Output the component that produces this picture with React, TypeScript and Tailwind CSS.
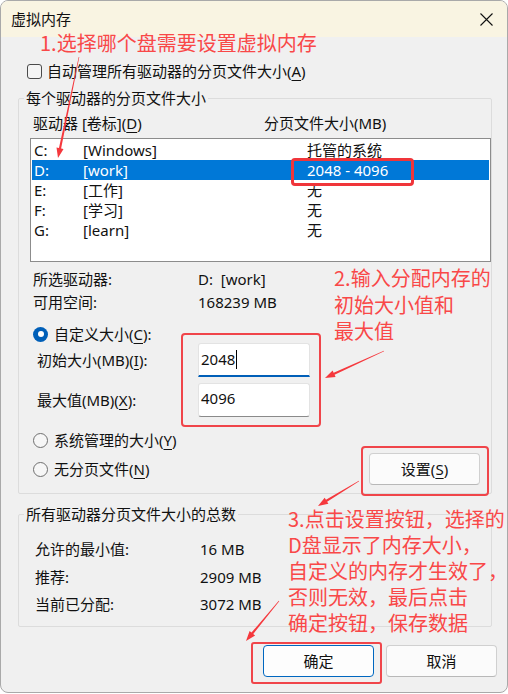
import React from "react";

const RED = "#f5383d";

function Mn({ children }: { children: React.ReactNode }) {
  return <span className="underline decoration-[1px] underline-offset-[3px]">{children}</span>;
}

function Radio({ checked }: { checked?: boolean }) {
  if (checked) {
    return (
      <span className="flex h-[15px] w-[15px] shrink-0 items-center justify-center rounded-full bg-[#005fb8]">
        <span className="h-[6px] w-[6px] rounded-full bg-white" />
      </span>
    );
  }
  return <span className="h-[15px] w-[15px] shrink-0 rounded-full border border-[#6f6f6f] bg-[#f6f6f6]" />;
}

// Tapered annotation arrow: thin tail, filled triangular head at (x2, y2)
function Arrow({ x1, y1, x2, y2 }: { x1: number; y1: number; x2: number; y2: number }) {
  const dx = x2 - x1;
  const dy = y2 - y1;
  const len = Math.hypot(dx, dy);
  const ux = dx / len;
  const uy = dy / len;
  const px = -uy;
  const py = ux;
  const hl = 10;
  const hw = 3.6;
  const bx = x2 - ux * hl;
  const by = y2 - uy * hl;
  const tw = 0.3;
  const sw = 1.1;
  const pts = [
    [x1 + px * tw, y1 + py * tw],
    [bx + px * sw, by + py * sw],
    [bx + px * hw, by + py * hw],
    [x2, y2],
    [bx - px * hw, by - py * hw],
    [bx - px * sw, by - py * sw],
    [x1 - px * tw, y1 - py * tw],
  ]
    .map((p) => `${p[0].toFixed(2)},${p[1].toFixed(2)}`)
    .join(" ");
  return <polygon points={pts} fill={RED} />;
}

const drives = [
  { l: "C:", n: "[Windows]", s: "托管的系统" },
  { l: "D:", n: "[work]", s: "2048 - 4096", sel: true },
  { l: "E:", n: "[工作]", s: "无" },
  { l: "F:", n: "[学习]", s: "无" },
  { l: "G:", n: "[learn]", s: "无" },
];

export default function App() {
  return (
    <div className="relative h-[694px] w-[508px] overflow-hidden bg-white font-['Noto_Sans','Noto_Sans_CJK_SC',sans-serif] text-[15px] leading-[20px] text-[#111]">
      {/* dialog window */}
      <div className="flex h-[693px] w-[508px] flex-col overflow-hidden rounded-[8px] border border-[#a9a9a9] bg-[#f0f0f0]">
        {/* title bar */}
        <div className="flex h-[36px] shrink-0 items-center justify-between bg-[#f9f4e2] pl-[10px] pr-[14px]">
          <span className="text-[15px] leading-[20px]">虚拟内存</span>
          <svg width="13" height="13" viewBox="0 0 13 13">
            <path d="M0.5 0.5 L12.5 12.5 M12.5 0.5 L0.5 12.5" stroke="#111" strokeWidth="1.1" />
          </svg>
        </div>

        {/* automatic management */}
        <div className="ml-[26px] mt-[24px] flex h-[20px] items-center gap-[5px]">
          <span className="h-[15px] w-[15px] shrink-0 rounded-[3px] border border-[#4a4a4a] bg-[#f4f4f4]" />
          <span>
            自动管理所有驱动器的分页文件大小(<Mn>A</Mn>)
          </span>
        </div>

        {/* per-drive paging file size */}
        <fieldset className="ml-[17px] mt-[7px] w-[474px] rounded-[2px] border border-[#dcdcdc] pb-[8px]">
          <legend className="ml-[5px] h-[20px] px-[2px] leading-[20px]">每个驱动器的分页文件大小</legend>
          <div className="mt-[5px] flex h-[20px] items-center pl-[14px]">
            <span className="w-[231px]">
              驱动器 [卷标](<Mn>D</Mn>)
            </span>
            <span>分页文件大小(MB)</span>
          </div>
          <div className="ml-[11px] mt-[5px] h-[124px] w-[461px] border border-[#8c8c8c] bg-white p-[1px]">
            {drives.map((d) => (
              <div
                key={d.l}
                className={`flex h-[20px] items-center pl-[2px] ${d.sel ? "bg-[#0078d7] text-white" : ""}`}
              >
                <span className="w-[49px]">{d.l}</span>
                <span className="w-[224px]">{d.n}</span>
                <span>{d.s}</span>
              </div>
            ))}
          </div>

          <div className="mt-[7px] flex h-[20px] items-center pl-[14px]">
            <span className="w-[165px]">所选驱动器:</span>
            <span>D:&nbsp; [work]</span>
          </div>
          <div className="mt-[3px] flex h-[20px] items-center pl-[14px]">
            <span className="w-[165px]">可用空间:</span>
            <span>168239 MB</span>
          </div>

          <div className="mt-[13px] flex h-[18px] items-center gap-[6px] pl-[14px]">
            <Radio checked />
            <span>
              自定义大小(<Mn>C</Mn>):
            </span>
          </div>
          <div className="flex h-[34px] items-center pl-[18px]">
            <span className="w-[161px]">
              初始大小(MB)(<Mn>I</Mn>):
            </span>
            <div className="h-[34px] w-[112px] rounded-t-[3px] border border-b-2 border-[#e3e3e3] border-b-[#005fb8] bg-white pl-[2px] pt-[5px]">
              <span className="inline-flex items-center">
                2048
                <span className="ml-[1px] inline-block h-[19px] w-[1px] bg-black" />
              </span>
            </div>
          </div>
          <div className="mt-[6px] flex h-[34px] items-center pl-[18px]">
            <span className="w-[161px]">
              最大值(MB)(<Mn>X</Mn>):
            </span>
            <div className="h-[34px] w-[112px] rounded-[3px] border border-[#e3e3e3] border-b-[#8a8a8a] bg-white pl-[2px] pt-[4px]">
              4096
            </div>
          </div>

          <div className="mt-[13px] flex h-[20px] items-center gap-[6px] pl-[14px]">
            <Radio />
            <span>
              系统管理的大小(<Mn>Y</Mn>)
            </span>
          </div>
          <div className="mt-[3px] flex h-[32px] items-center justify-between pl-[14px] pr-[11px]">
            <div className="flex items-center gap-[6px]">
              <Radio />
              <span>
                无分页文件(<Mn>N</Mn>)
              </span>
            </div>
            <button className="h-[32px] w-[111px] rounded-[4px] border border-[#d0d0d0] border-b-[#b8b8b8] bg-[#fbfbfb] text-[15px] leading-[20px]">
              设置(<Mn>S</Mn>)
            </button>
          </div>
        </fieldset>

        {/* totals for all drives */}
        <fieldset className="ml-[17px] mt-[10px] w-[474px] rounded-[2px] border border-[#dcdcdc] pb-[12px]">
          <legend className="ml-[5px] h-[20px] px-[2px] leading-[20px]">所有驱动器分页文件大小的总数</legend>
          <div className="mt-[15px] flex h-[20px] items-center pl-[16px]">
            <span className="w-[165px]">允许的最小值:</span>
            <span>16 MB</span>
          </div>
          <div className="mt-[8px] flex h-[20px] items-center pl-[16px]">
            <span className="w-[165px]">推荐:</span>
            <span>2909 MB</span>
          </div>
          <div className="mt-[7px] flex h-[20px] items-center pl-[16px]">
            <span className="w-[165px]">当前已分配:</span>
            <span>3072 MB</span>
          </div>
        </fieldset>

        {/* dialog buttons */}
        <div className="mt-[18px] flex justify-end gap-[12px] pr-[10px]">
          <button className="h-[32px] w-[111px] rounded-[4px] border border-[#0067c0] bg-[#fdfdfd] text-[15px] leading-[20px]">
            确定
          </button>
          <button className="h-[32px] w-[111px] rounded-[4px] border border-[#d0d0d0] border-b-[#b8b8b8] bg-[#fbfbfb] text-[15px] leading-[20px]">
            取消
          </button>
        </div>
      </div>

      {/* red callout notes */}
      <div className="pointer-events-none absolute left-[40px] top-[30px] whitespace-nowrap font-['Noto_Sans_CJK_SC',sans-serif] text-[20px] leading-[26px] text-[#f94848]">
        1.选择哪个盘需要设置虚拟内存
      </div>
      <div className="pointer-events-none absolute left-[334px] top-[265px] whitespace-nowrap font-['Noto_Sans_CJK_SC',sans-serif] text-[20px] leading-[26.5px] text-[#f94848]">
        <div>2.输入分配内存的</div>
        <div>初始大小值和</div>
        <div>最大值</div>
      </div>
      <div className="pointer-events-none absolute left-[288px] top-[506px] whitespace-nowrap font-['Noto_Sans_CJK_SC',sans-serif] text-[20px] leading-[26px] text-[#f94848]">
        <div>3.点击设置按钮，选择的</div>
        <div>D盘显示了内存大小，</div>
        <div>自定义的内存才生效了，</div>
        <div>否则无效，最后点击</div>
        <div>确定按钮，保存数据</div>
      </div>

      {/* highlight boxes */}
      <div className="pointer-events-none absolute left-[291px] top-[158px] h-[28px] w-[123px] rounded-[4px] border-[3px] border-[#f0353a]" />
      <div className="pointer-events-none absolute left-[181px] top-[333px] h-[94px] w-[140px] rounded-[4px] border-2 border-[#f0454a]" />
      <div className="pointer-events-none absolute left-[361px] top-[446px] h-[50px] w-[128px] rounded-[4px] border-2 border-[#f0454a]" />
      <div className="pointer-events-none absolute left-[251px] top-[642px] h-[42px] w-[131px] rounded-[3px] border-2 border-[#f0454a]" />

      {/* pointer arrows */}
      <svg className="pointer-events-none absolute left-0 top-0" width="508" height="694" viewBox="0 0 508 694">
        <Arrow x1={79} y1={57} x2={58} y2={158} />
        <Arrow x1={384} y1={351} x2={325} y2={378} />
        <Arrow x1={359} y1={481} x2={318} y2={506} />
        <Arrow x1={279} y1={601} x2={246} y2={641} />
      </svg>
    </div>
  );
}
